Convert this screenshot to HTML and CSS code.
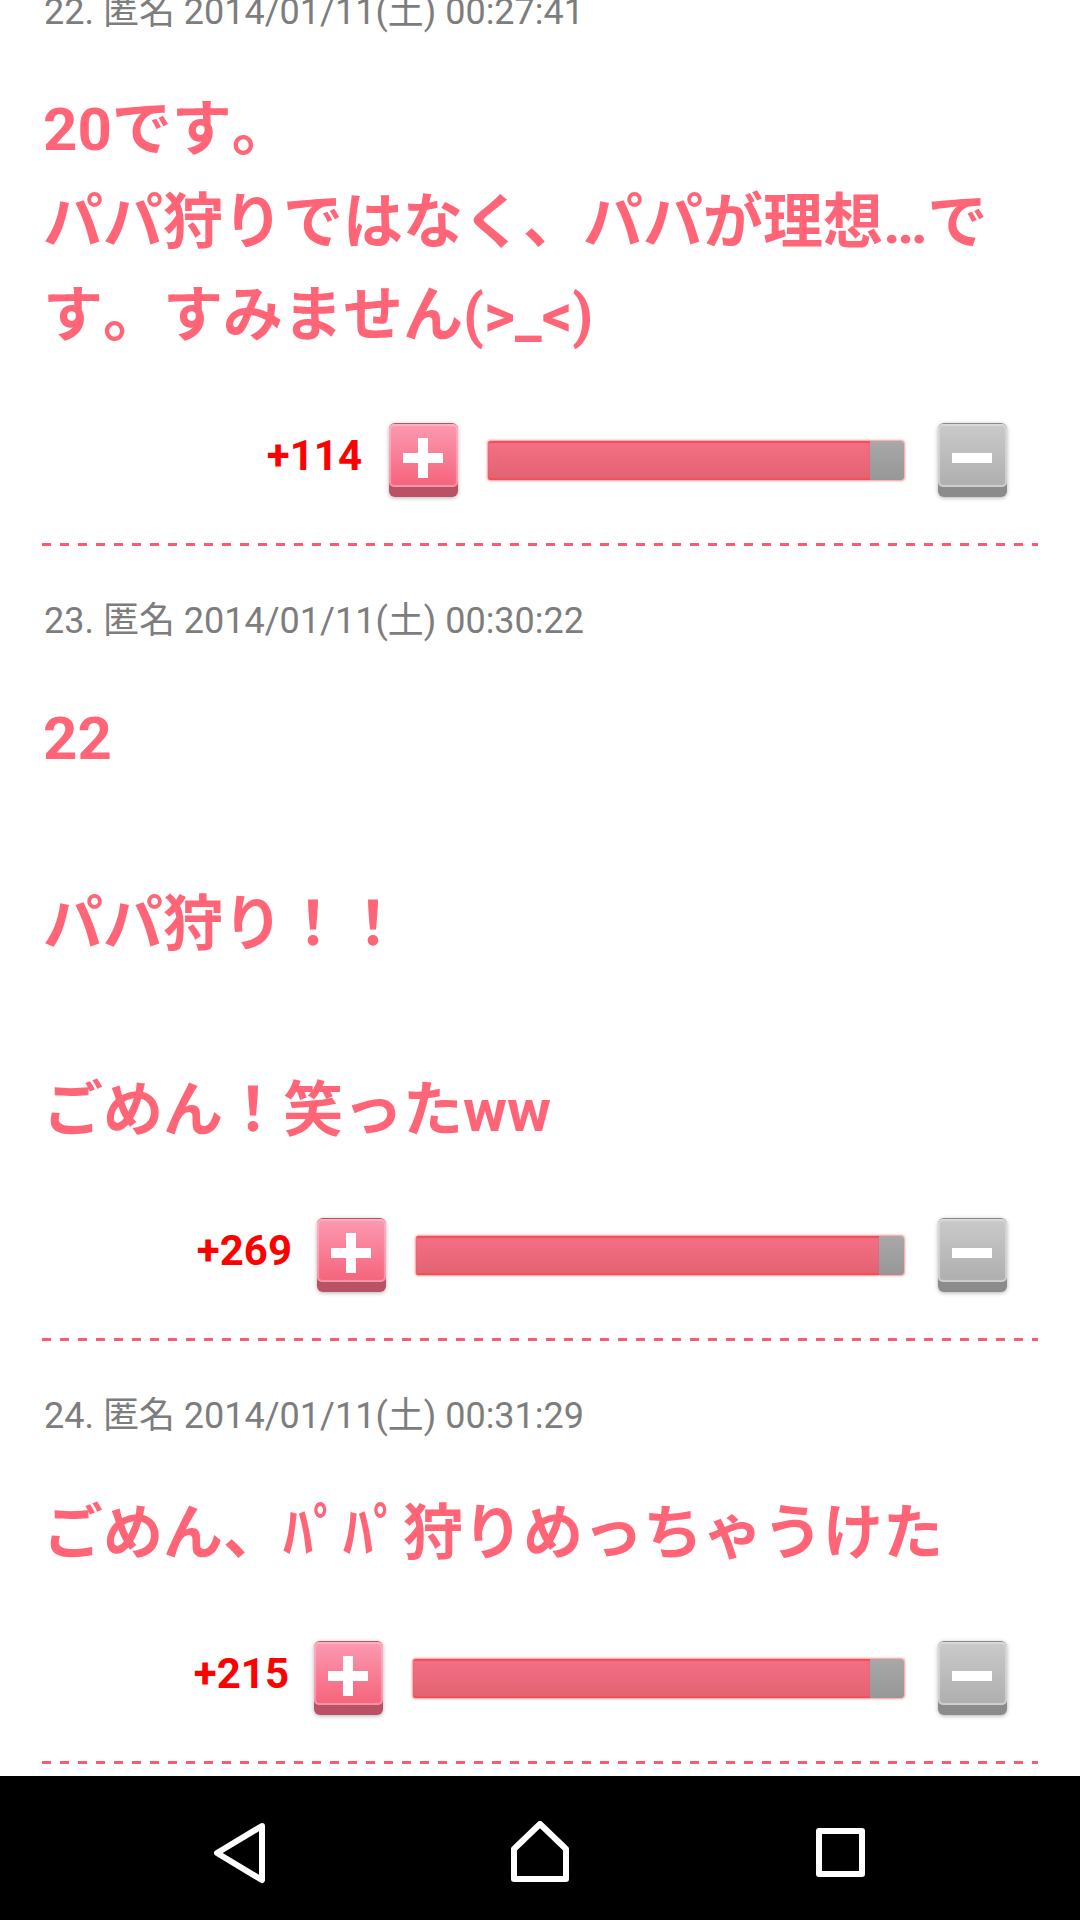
FILE: index.html
```html
<!DOCTYPE html>
<html lang="ja">
<head>
<meta charset="utf-8">
<title>コメント</title>
<link rel="stylesheet" href="styles.css">
</head>
<body>
<div class="screen">
  <main class="comments">
    <article class="comment">
      <p class="meta">22. 匿名 2014/01/11(土) 00:27:41</p>
      <p class="body">20です。<br>パパ狩りではなく、パパが理想…です。すみません(&gt;_&lt;)</p>
      <div class="rating">
        <span class="score">+114</span>
        <span class="btn btn-plus"><span class="btn-face"></span></span>
        <span class="bar" style="width:416px"><span class="bar-fill" style="width:91.8%"></span></span>
        <span class="btn btn-minus"><span class="btn-face"></span></span>
      </div>
    </article>
    <article class="comment">
      <p class="meta">23. 匿名 2014/01/11(土) 00:30:22</p>
      <p class="body">22<br><br>パパ狩り！！<br><br>ごめん！笑ったww</p>
      <div class="rating">
        <span class="score score-tight">+269</span>
        <span class="btn btn-plus"><span class="btn-face"></span></span>
        <span class="bar" style="width:488px"><span class="bar-fill" style="width:94.9%"></span></span>
        <span class="btn btn-minus"><span class="btn-face"></span></span>
      </div>
    </article>
    <article class="comment">
      <p class="meta">24. 匿名 2014/01/11(土) 00:31:29</p>
      <p class="body">ごめん、ﾊﾟﾊﾟ狩りめっちゃうけた</p>
      <div class="rating">
        <span class="score score-tight">+215</span>
        <span class="btn btn-plus"><span class="btn-face"></span></span>
        <span class="bar" style="width:491px"><span class="bar-fill" style="width:93.1%"></span></span>
        <span class="btn btn-minus"><span class="btn-face"></span></span>
      </div>
    </article>
  </main>
  <nav class="navbar">
    <svg class="nav-icon" width="60" height="64" viewBox="0 0 60 64"><path d="M52 5 L7 32 L52 59 Z" fill="none" stroke="#fff" stroke-width="6" stroke-linejoin="round"/></svg>
    <svg class="nav-icon" width="60" height="64" viewBox="0 0 60 64"><path d="M30 3 L4 28 V58 H56 V28 Z" fill="none" stroke="#fff" stroke-width="6" stroke-linejoin="round"/></svg>
    <svg class="nav-icon" width="60" height="64" viewBox="0 0 60 64"><rect x="9" y="10" width="43" height="43" fill="none" stroke="#fff" stroke-width="6" stroke-linejoin="round"/></svg>
  </nav>
</div>
</body>
</html>
```
FILE: styles.css
```css
* { box-sizing: border-box; }
html, body { margin: 0; padding: 0; background: #fff; }
.screen {
  width: 1080px;
  height: 1920px;
  display: flex;
  flex-direction: column;
  overflow: hidden;
  font-family: Roboto, "Noto Sans CJK JP", sans-serif;
}
.comments {
  flex: 1;
  min-height: 0;
  margin-top: -63px;
  padding: 0 42px;
}
.comment {
  padding-top: 50px;
  background: repeating-linear-gradient(to right, #fb5a72 0 9px, transparent 9px 18px) left bottom / 100% 3px no-repeat;
  padding-bottom: 49px;
}
.meta {
  margin: 0;
  padding-left: 2px;
  font-size: 36px;
  line-height: 51px;
  color: #7d7d7d;
}
.body {
  margin: 45px 0 0;
  padding-left: 1px;
  font-size: 60px;
  line-height: 93px;
  font-weight: 700;
  color: #ff6477;
  font-kerning: none;
}
.rating {
  display: flex;
  align-items: flex-start;
  justify-content: flex-end;
  margin-top: 61px;
  padding-right: 31px;
}
.score {
  margin-right: 27px;
  font-size: 42px;
  line-height: 66px;
  font-weight: 700;
  color: #ff0000;
}
.score-tight { margin-right: 25px; }
.btn {
  flex: none;
  width: 69px;
  height: 74px;
  padding-top: 1px;
  border-radius: 6px;
  box-shadow: 0 1px 4px rgba(0,0,0,.3);
}
.btn-plus { background: #ba5265; }
.btn-minus { background: #8b8b8b; }
.btn-face {
  display: block;
  position: relative;
  height: 63px;
  border-radius: 5px;
}
.btn-plus .btn-face {
  background: linear-gradient(#fb9ab2, #f5637a);
  box-shadow: inset 0 0 1px 2px rgba(255,200,215,.5);
}
.btn-minus .btn-face {
  background: linear-gradient(#cacaca, #aeaeae);
  box-shadow: inset 0 0 1px 2px rgba(225,225,225,.65);
}
.btn-face::before {
  content: "";
  position: absolute;
  left: 14px;
  top: 29px;
  width: 40px;
  height: 10px;
  background: #fff;
}
.btn-plus .btn-face::after {
  content: "";
  position: absolute;
  left: 29px;
  top: 14px;
  width: 10px;
  height: 40px;
  background: #fff;
}
.bar {
  display: block;
  flex: none;
  height: 39px;
  margin: 18px 34px 0 30px;
  border-radius: 3px;
  background: linear-gradient(#a8a8a8, #979797);
  box-shadow: 0 0 2px 1px rgba(255,120,120,.8);
  overflow: hidden;
}
.bar-fill {
  display: block;
  height: 100%;
  background: linear-gradient(#f56f86, #e26370);
  box-shadow: inset 0 2px 1px #f0505a, inset 0 -2px 1px #f0505a;
}
.navbar {
  flex: none;
  height: 144px;
  background: #000;
  display: flex;
  align-items: center;
  padding: 10px 0 0 210px;
  gap: 240px;
}
.nav-icon { display: block; flex: none; }
```
